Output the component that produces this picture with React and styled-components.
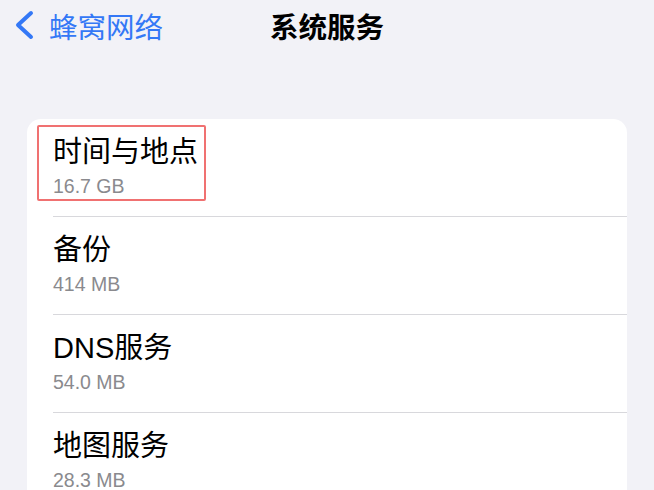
import styled, { createGlobalStyle } from "styled-components";

const GlobalStyle = createGlobalStyle`
  body {
    margin: 0;
    background: #f2f2f7;
    font-family: "Liberation Sans", "Noto Sans CJK SC", sans-serif;
    -webkit-font-smoothing: antialiased;
  }
`;

const Page = styled.div`
  width: 654px;
  height: 490px;
  overflow: hidden;
  background: #f2f2f7;
`;

const NavBar = styled.div`
  display: grid;
  grid-template-columns: 1fr auto 1fr;
  align-items: center;
  height: 50px;
`;

const Back = styled.div`
  display: flex;
  align-items: center;
  gap: 15px;
  padding-left: 14px;
  color: #3478f6;
  font-size: 28.5px;
  font-family: "Noto Sans CJK SC", sans-serif;
`;

const Title = styled.div`
  font-size: 28.5px;
  font-weight: 700;
  color: #000;
  font-family: "Noto Sans CJK SC", sans-serif;
`;

const Card = styled.div`
  margin: 69px 27px 0;
  background: #fff;
  border-radius: 14px 14px 0 0;
  height: 400px;
`;

const Row = styled.div`
  position: relative;
  padding-left: 26px;
`;

const RowInner = styled.div`
  display: flex;
  flex-direction: column;
  gap: 5px;
  padding: 16px 0 18px;
  border-bottom: ${(p) => (p.$last ? "none" : "1px solid #d8d8dc")};
`;

const Label = styled.div`
  font-size: 29px;
  line-height: 34px;
  color: #000;
`;

const Size = styled.div`
  font-size: 19.5px;
  line-height: 24px;
  color: #8a8a8e;
`;

const Highlight = styled.div`
  position: absolute;
  left: 10px;
  top: 6px;
  width: 165px;
  height: 72px;
  border: 2px solid #f07171;
  border-radius: 2px;
  pointer-events: none;
`;

const items = [
  { label: "时间与地点", size: "16.7 GB", mark: true },
  { label: "备份", size: "414 MB" },
  { label: "DNS服务", size: "54.0 MB" },
  { label: "地图服务", size: "28.3 MB", last: true },
];

export default function App() {
  return (
    <Page>
      <GlobalStyle />
      <NavBar>
        <Back>
          <svg width="20" height="30" viewBox="0 0 20 30">
            <path
              d="M17 3 L4 15 L17 27"
              fill="none"
              stroke="#3478f6"
              strokeWidth="4"
              strokeLinecap="round"
              strokeLinejoin="round"
            />
          </svg>
          <span>蜂窝网络</span>
        </Back>
        <Title>系统服务</Title>
        <div />
      </NavBar>
      <Card>
        {items.map((it) => (
          <Row key={it.label}>
            {it.mark && <Highlight />}
            <RowInner $last={it.last}>
              <Label>{it.label}</Label>
              <Size>{it.size}</Size>
            </RowInner>
          </Row>
        ))}
      </Card>
    </Page>
  );
}
